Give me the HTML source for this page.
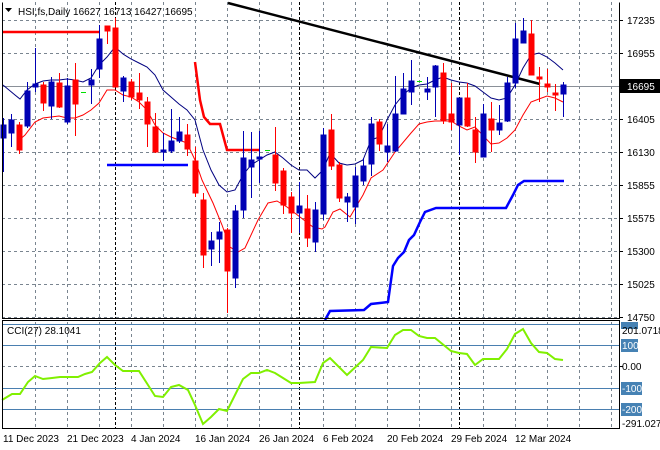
<!DOCTYPE html>
<html><head><meta charset="utf-8"><style>
html,body{margin:0;padding:0;background:#fff;width:660px;height:450px;overflow:hidden}
svg{display:block}
text{font-family:"Liberation Sans",sans-serif;font-size:10px;fill:#000}
</style></head><body>
<svg width="660" height="450" viewBox="0 0 660 450" xmlns="http://www.w3.org/2000/svg">
<rect width="660" height="450" fill="#fff"/>
<!-- grid -->
<g stroke="#7a8590" stroke-width="1" stroke-dasharray="3,3" fill="none">
<path d="M35.5 2V318M67.5 2V318M99.5 2V318M131.5 2V318M163.5 2V318M195.5 2V318M227.5 2V318M259.5 2V318M291.5 2V318M323.5 2V318M355.5 2V318M387.5 2V318M419.5 2V318M451.5 2V318M483.5 2V318M515.5 2V318M547.5 2V318M579.5 2V318M611.5 2V318"/>
<path d="M35.5 322V428M67.5 322V428M99.5 322V428M131.5 322V428M163.5 322V428M195.5 322V428M227.5 322V428M259.5 322V428M291.5 322V428M323.5 322V428M355.5 322V428M387.5 322V428M419.5 322V428M451.5 322V428M483.5 322V428M515.5 322V428M547.5 322V428M579.5 322V428M611.5 322V428"/>
<path d="M2 20.5H619M2 53.5H619M2 119.5H619M2 152.5H619M2 185.5H619M2 218.5H619M2 251.5H619M2 284.5H619M2 317.5H619M2 366.5H619"/>
</g>
<path d="M2 86.5H619" stroke="#8a9098" stroke-width="1"/>
<g stroke="#000" stroke-width="1" stroke-dasharray="3,2">
<path d="M115.5 2V318M299.5 2V318M459.5 2V318M115.5 322V428M299.5 322V428M459.5 322V428"/>
</g>
<!-- CCI levels -->
<g stroke="#4a7fb0" stroke-width="1">
<path d="M2 324.5H619M2 345.5H619M2 388.5H619M2 409.5H619"/>
</g>
<!-- indicator lines -->
<polyline fill="none" stroke="#ff0000" stroke-width="2.5" points="2,32 100,32"/>
<polyline fill="none" stroke="#ff0000" stroke-width="2.5" points="195,62 200,100 204,117 210,124 220,124 227,150 259,150"/>
<polyline fill="none" stroke="#0000ff" stroke-width="2.5" points="107,165 188,165"/>
<polyline fill="none" stroke="#0000ff" stroke-width="2.5" points="325,320 330,311 364,310 371,304 388,302 393,266 398,258 404,252 409,240 414,235 420,222 425,212 436,208 506,208 513,195 518,185 524,181 564,181"/>
<polyline fill="none" stroke="#000" stroke-width="2.5" points="228,3 540,84"/>
<polyline fill="none" stroke="#000080" stroke-width="1" points="3,85 15,95 20,99 27,90 35,84 43,81 51,80 59,80 67,79 75,80 83,82 91,78 99,65 107,57 115,47 123,54 131,59 139,63 147,67 155,75 163,90 171,97 179,104 187,110 195,120 203,150 211,170 219,185 227,192 235,190 243,175 251,165 259,160 267,155 275,152 283,158 291,165 299,170 307,170 315,178 323,170 330,153 339,163 347,165 355,164 363,160 371,140 379,137 387,120 395,105 403,95 411,88 419,85 427,84 435,80 443,77 451,80 459,82 467,83 475,86 483,92 491,98 499,100 507,98 515,85 523,68 531,55 539,53 547,57 555,63 563,70"/>
<polyline fill="none" stroke="#ff0000" stroke-width="1" points="17,142 25,135 35,122 43,118 51,117 59,116 67,118 75,118 83,115 91,110 99,103 107,90 115,90 123,95 131,97 139,102 147,110 155,125 163,133 171,137 179,140 187,143 195,160 202,180 213,203 222,225 230,247 238,252 245,248 258,220 268,203 277,201 287,207 300,217 313,227 322,229 325,227 333,212 340,209 350,217 363,195 371,178 383,170 395,152 411,133 419,124 427,122 435,121 451,121 459,126 467,130 475,127 491,144 499,143 507,138 515,130 523,115 531,102 539,99 547,96 555,98 563,102"/>
<!-- candles -->
<g stroke-width="1" shape-rendering="crispEdges">
<g stroke="#0000b4" fill="#0000b4">
<path d="M3.5 118V172M11.5 114V147M27.5 82V128M35.5 48V92M51.5 77V119M67.5 78V124M91.5 69V104M99.5 25V78M123.5 76V102M163.5 133V161M171.5 109V153M179.5 117V143M211.5 232V266M219.5 222V263M235.5 205V288M243.5 131V218M251.5 132V198M259.5 131V183M299.5 182V233M315.5 202V252M323.5 128V220M347.5 193V222M355.5 167V224M363.5 158V185M371.5 117V176M387.5 124V162M395.5 76V152M403.5 73V114M411.5 60V105M427.5 77V100M435.5 65V117M459.5 98V155M483.5 104V157M499.5 105V135M507.5 77V122M515.5 23V88M523.5 18V43M563.5 82V117"/>
<rect x="1" y="125" width="5" height="13"/><rect x="9" y="120" width="5" height="13"/><rect x="25" y="91" width="5" height="35"/><rect x="33" y="84" width="5" height="3"/><rect x="49" y="82" width="5" height="24"/><rect x="65" y="86" width="5" height="36"/><rect x="89" y="80" width="5" height="5"/><rect x="97" y="39" width="5" height="30"/><rect x="121" y="78" width="5" height="13"/><rect x="161" y="150" width="5" height="2"/><rect x="169" y="141" width="5" height="10"/><rect x="177" y="132" width="5" height="9"/><rect x="209" y="241" width="5" height="8"/><rect x="217" y="232" width="5" height="7"/><rect x="233" y="211" width="5" height="67"/><rect x="241" y="158" width="5" height="52"/><rect x="249" y="160" width="5" height="7"/><rect x="257" y="157" width="5" height="2"/><rect x="297" y="206" width="5" height="7"/><rect x="313" y="210" width="5" height="32"/><rect x="321" y="135" width="5" height="79"/><rect x="345" y="197" width="5" height="5"/><rect x="353" y="176" width="5" height="31"/><rect x="361" y="166" width="5" height="15"/><rect x="369" y="124" width="5" height="40"/><rect x="385" y="146" width="5" height="6"/><rect x="393" y="114" width="5" height="37"/><rect x="401" y="89" width="5" height="25"/><rect x="409" y="81" width="5" height="11"/><rect x="425" y="89" width="5" height="3"/><rect x="433" y="66" width="5" height="21"/><rect x="457" y="98" width="5" height="27"/><rect x="481" y="114" width="5" height="43"/><rect x="497" y="123" width="5" height="7"/><rect x="505" y="83" width="5" height="38"/><rect x="513" y="39" width="5" height="44"/><rect x="521" y="31" width="5" height="12"/><rect x="561" y="85" width="5" height="9"/>
</g>
<g stroke="#ff0000" fill="#ff0000">
<path d="M19.5 122V154M43.5 82V111M59.5 73V108M75.5 63V136M107.5 26V44M115.5 18V87M131.5 79V100M139.5 73V109M147.5 97V147M155.5 113V153M187.5 124V156M195.5 147V197M203.5 193V268M227.5 228V313M275.5 127V191M283.5 168V214M291.5 192V233M307.5 195V247M331.5 114V170M339.5 162V202M379.5 119V151M443.5 63V124M451.5 83V130M467.5 83V127M475.5 117V163M491.5 102V152M531.5 20V75M539.5 67V102M547.5 69V92M555.5 84V111"/>
<rect x="17" y="125" width="5" height="25"/><rect x="41" y="85" width="5" height="18"/><rect x="57" y="83" width="5" height="24"/><rect x="73" y="80" width="5" height="24"/><rect x="105" y="26" width="5" height="5"/><rect x="113" y="28" width="5" height="59"/><rect x="129" y="82" width="5" height="15"/><rect x="137" y="93" width="5" height="7"/><rect x="145" y="102" width="5" height="22"/><rect x="153" y="127" width="5" height="25"/><rect x="185" y="135" width="5" height="14"/><rect x="193" y="161" width="5" height="32"/><rect x="201" y="200" width="5" height="55"/><rect x="225" y="230" width="5" height="41"/><rect x="273" y="155" width="5" height="28"/><rect x="281" y="171" width="5" height="34"/><rect x="289" y="197" width="5" height="16"/><rect x="305" y="209" width="5" height="29"/><rect x="329" y="130" width="5" height="36"/><rect x="337" y="165" width="5" height="33"/><rect x="377" y="122" width="5" height="22"/><rect x="441" y="73" width="5" height="48"/><rect x="449" y="114" width="5" height="8"/><rect x="465" y="98" width="5" height="28"/><rect x="473" y="130" width="5" height="22"/><rect x="489" y="119" width="5" height="11"/><rect x="529" y="34" width="5" height="41"/><rect x="537" y="77" width="5" height="2"/><rect x="545" y="84" width="5" height="3"/><rect x="553" y="93" width="5" height="2"/>
</g>
<path d="M81 92.5H86M265 150.5H270M417 81.5H422" stroke="#00e000"/>
</g>
<!-- CCI -->
<polyline fill="none" stroke="#80f000" stroke-width="2" points="2,400 12,394 20,394 28,382 35,376 43,379 52,378 60,377 78,377 85,374 92,372 100,363 107,357 115,365 123,371 139,371 148,385 155,396 163,397 171,387 179,385 188,390 195,405 203,424 211,417 219,409 227,411 235,395 243,379 251,373 259,373 267,370 275,373 283,378 291,383 299,383 315,382 323,363 330,358 347,375 363,360 371,347 387,348 395,335 403,330 411,330 419,336 427,338 435,338 451,351 459,353 467,354 475,365 483,359 499,359 507,349 515,334 523,329 531,343 539,352 547,353 555,359 563,360"/>
<!-- frames -->
<g fill="none" stroke="#000" stroke-width="1">
<path d="M2.5 2.5V318.5H619.5V2.5"/>
<path d="M2 320.5H620M2.5 321V428.5H619.5V321"/>
</g>
<!-- axis ticks -->
<g stroke="#000"><path d="M619 20.5h4M619 53.5h4M619 119.5h4M619 152.5h4M619 185.5h4M619 218.5h4M619 251.5h4M619 284.5h4M619 317.5h4M619 366.5h4"/></g>
<!-- title -->
<path d="M5 8h7l-3.5 4z" fill="#000"/>
<text x="18" y="15">HSI,fs,Daily  16627 16713 16427 16695</text>
<text x="7" y="334">CCI(27) 28.1041</text>
<!-- price labels -->
<g>
<text x="627" y="24">17235</text><text x="627" y="57">16955</text>
<text x="627" y="123">16405</text><text x="627" y="156">16130</text><text x="627" y="189">15855</text>
<text x="627" y="222">15575</text><text x="627" y="255">15300</text><text x="627" y="288">15025</text><text x="627" y="321">14750</text>
</g>
<rect x="620" y="79" width="40" height="14" fill="#000"/>
<text x="627" y="90" style="fill:#fff">16695</text>
<rect x="621" y="322" width="17" height="7" fill="#4682b4"/>
<text x="622" y="334">201.0718</text>
<rect x="621" y="339" width="17" height="13" fill="#4682b4"/><text x="622" y="349" style="fill:#fff">100</text>
<text x="622" y="370">0.00</text>
<rect x="621" y="382" width="21" height="13" fill="#4682b4"/><text x="622" y="392" style="fill:#fff">-100</text>
<rect x="621" y="403" width="21" height="13" fill="#4682b4"/><text x="622" y="413" style="fill:#fff">-200</text>
<text x="622" y="427">-291.0274</text>
<!-- dates -->
<g>
<text x="3" y="442">11 Dec 2023</text><text x="67" y="442">21 Dec 2023</text><text x="131" y="442">4 Jan 2024</text>
<text x="195" y="442">16 Jan 2024</text><text x="259" y="442">26 Jan 2024</text><text x="323" y="442">6 Feb 2024</text>
<text x="387" y="442">20 Feb 2024</text><text x="451" y="442">29 Feb 2024</text><text x="515" y="442">12 Mar 2024</text>
</g>
</svg>
</body></html>
